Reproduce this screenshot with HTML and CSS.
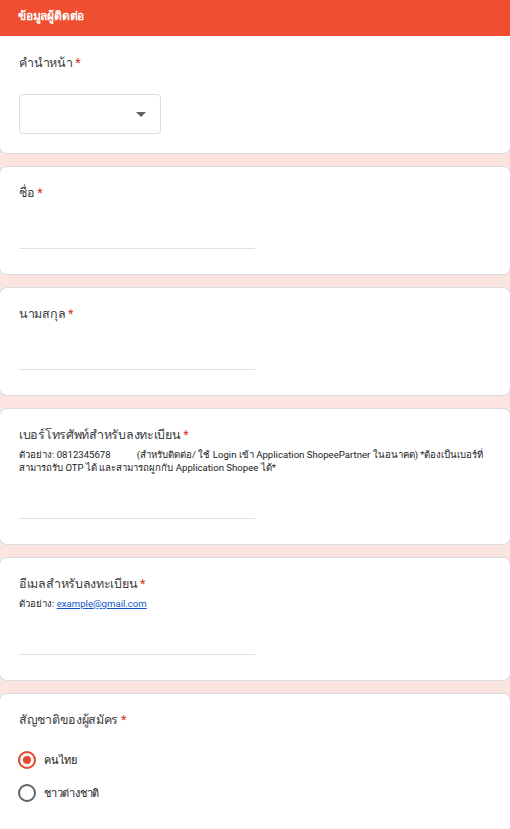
FILE: index.html
```html
<!DOCTYPE html>
<html lang="th">

<head>
    <meta charset="UTF-8">
    <meta name="viewport" content="width=device-width, initial-scale=1.0">
    <title>ข้อมูลผู้ติดต่อ</title>
    <link rel="stylesheet" href="styles.css">
</head>

<body>

    <!-- Form sections -->
    <div class="form">

        <!-- Section header + first question -->
        <div class="card first">
            <div class="section-title">ข้อมูลผู้ติดต่อ</div>
            <div class="card-body">
                <div class="label">คำนำหน้า <span class="req">*</span></div>
                <div class="select">
                    <span class="arrow"></span>
                </div>
            </div>
        </div>

        <div class="card">
            <div class="card-body">
                <div class="label">ชื่อ <span class="req">*</span></div>
                <div class="text-input"></div>
            </div>
        </div>

        <div class="card">
            <div class="card-body">
                <div class="label">นามสกุล <span class="req">*</span></div>
                <div class="text-input"></div>
            </div>
        </div>

        <div class="card">
            <div class="card-body">
                <div class="label">เบอร์โทรศัพท์สำหรับลงทะเบียน <span class="req">*</span></div>
                <div class="help">ตัวอย่าง: 0812345678           (สำหรับติดต่อ/ ใช้ Login เข้า Application ShopeePartner ในอนาคต) *ต้องเป็นเบอร์ที่สามารถรับ OTP ได้ และสามารถผูกกับ Application Shopee ได้*</div>
                <div class="text-input"></div>
            </div>
        </div>

        <div class="card">
            <div class="card-body">
                <div class="label">อีเมลสำหรับลงทะเบียน <span class="req">*</span></div>
                <div class="help">ตัวอย่าง: <a href="#">example@gmail.com</a></div>
                <div class="text-input"></div>
            </div>
        </div>

        <div class="card">
            <div class="card-body">
                <div class="label">สัญชาติของผู้สมัคร <span class="req">*</span></div>
                <div class="options">
                    <div class="option">
                        <span class="radio checked"></span>
                        <span>คนไทย</span>
                    </div>
                    <div class="option">
                        <span class="radio"></span>
                        <span>ชาวต่างชาติ</span>
                    </div>
                </div>
            </div>
        </div>

    </div>

</body>

</html>
```

FILE: styles.css
```css
/* Page background */
body {
    background-color: #fce4e0;
    font-family: Roboto, "Noto Sans", "DejaVu Sans", sans-serif;
    color: #202124;
    margin: 0;
    padding: 0;
}

/* Cards stack */
.form {
    display: flex;
    flex-direction: column;
    gap: 12px;
    padding-bottom: 12px;
}

.card {
    background-color: white;
    border: 1px solid #dadce0;
    border-radius: 8px;
    margin: 0 -1px;
    overflow: hidden;
}

.card.first {
    border-top: none;
    border-radius: 0 0 8px 8px;
}

/* Section header bar */
.section-title {
    background-color: #f04e31;
    color: white;
    font-size: 12px;
    font-weight: bold;
    letter-spacing: -0.2px;
    height: 36px;
    line-height: 33px;
    padding: 0 18px;
}

.card-body {
    padding: 15px 16px 25px 19px;
}

.first .card-body {
    padding-top: 16px;
    padding-bottom: 19px;
}

/* Question title */
.label {
    font-size: 12.5px;
    letter-spacing: -0.3px;
    line-height: 22px;
    color: #3c4043;
}

.req {
    color: #d93025;
}

/* Help text under the title */
.help {
    font-size: 9.6px;
    line-height: 13px;
    margin-top: 2px;
    white-space: pre-wrap;
    color: #202124;
}

.help a {
    color: #1155cc;
}

/* Short answer line */
.text-input {
    width: 236px;
    height: 44px;
    border-bottom: 1px solid #e0e0e0;
}

/* Dropdown */
.select {
    width: 142px;
    height: 40px;
    margin-top: 20px;
    border: 1px solid #dadce0;
    border-radius: 4px;
    display: flex;
    align-items: center;
    justify-content: flex-end;
    padding-right: 14px;
    box-sizing: border-box;
}

.arrow {
    width: 0;
    height: 0;
    border-left: 5px solid transparent;
    border-right: 5px solid transparent;
    border-top: 5px solid #5f6368;
}

/* Radio choices */
.options {
    margin-top: 12px;
}

.option {
    display: flex;
    align-items: center;
    gap: 8px;
    height: 33px;
    font-size: 11px;
    letter-spacing: -0.2px;
}

.radio {
    width: 14px;
    height: 14px;
    margin-left: -1px;
    border: 2px solid #5f6368;
    border-radius: 50%;
    display: flex;
    align-items: center;
    justify-content: center;
}

.radio.checked {
    border-color: #e04a2a;
}

.radio.checked::after {
    content: "";
    width: 8px;
    height: 8px;
    border-radius: 50%;
    background-color: #e04a2a;
}
```
